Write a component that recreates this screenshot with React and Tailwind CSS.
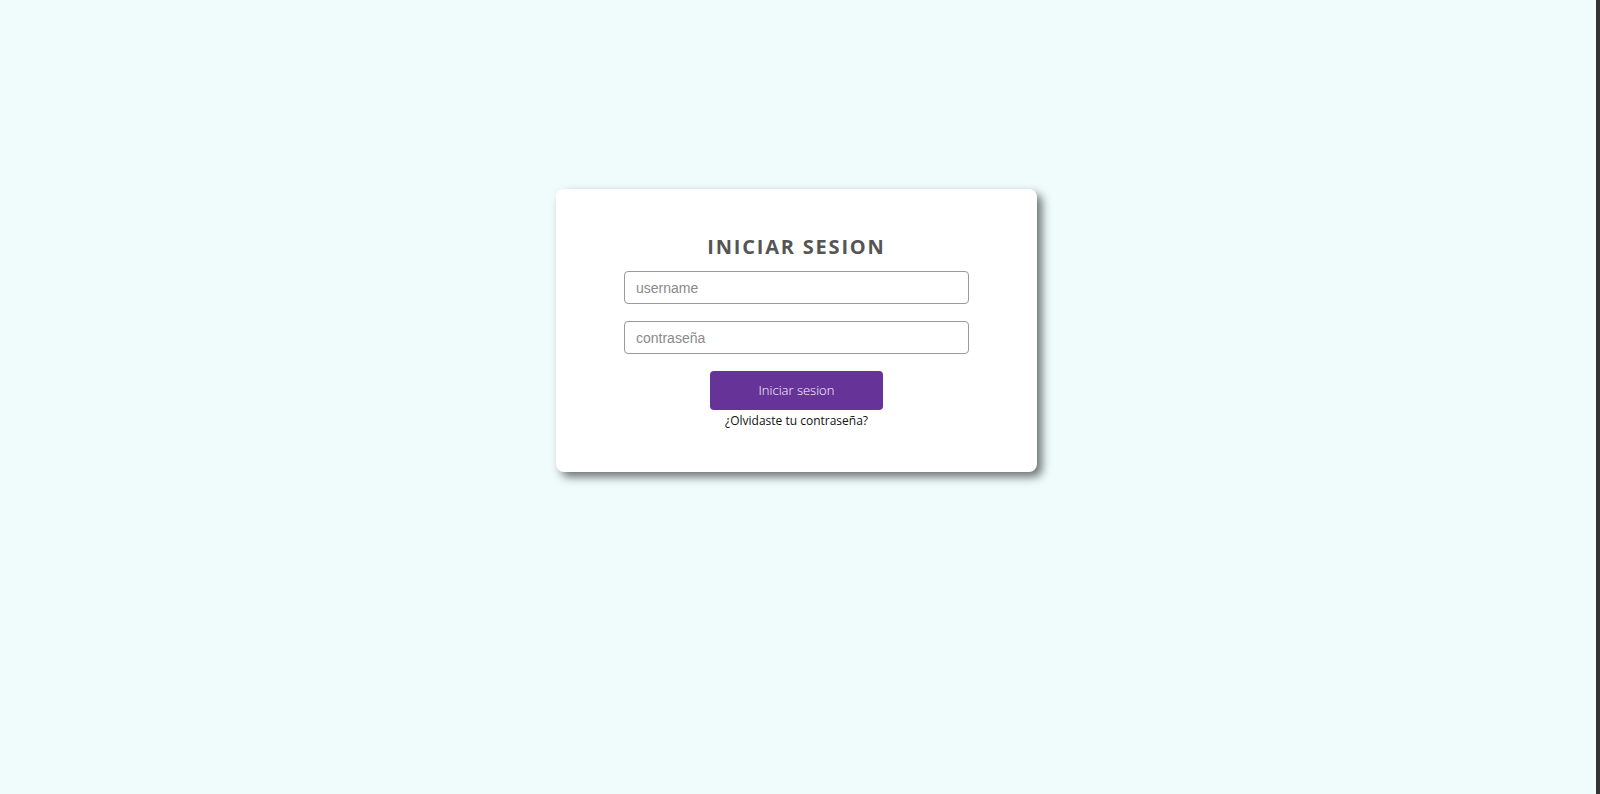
export default function App() {
  return (
    <div className="flex h-[794px] w-full overflow-hidden">
      <main className="flex flex-1 justify-center bg-[#f0fcfc] pr-[3px]">
        <div className="mt-[189px] flex h-[283px] w-[481px] flex-col items-center rounded-[8px] bg-white pt-[44px] shadow-[5px_5px_10px_rgba(0,0,0,0.55)]">
          <h1 className="text-[20px] font-bold leading-[28px] tracking-[1.8px] text-[#555]" style={{ fontFamily: '"Open Sans", sans-serif' }}>
            INICIAR SESION
          </h1>
          <form className="mt-[10px] flex flex-col items-center">
            <input
              type="text"
              placeholder="username"
              className="h-[33px] w-[345px] rounded-[4px] border border-[#9a9a9a] px-[11px] text-[14px] outline-none placeholder:text-[#8a8a8a]"
              style={{ fontFamily: '"Liberation Sans", Arial, sans-serif' }}
            />
            <input
              type="password"
              placeholder="contraseña"
              className="mt-[17px] h-[33px] w-[345px] rounded-[4px] border border-[#9a9a9a] px-[11px] text-[14px] outline-none placeholder:text-[#8a8a8a]"
              style={{ fontFamily: '"Liberation Sans", Arial, sans-serif' }}
            />
            <button
              type="button"
              className="mt-[17px] h-[39px] w-[173px] rounded-[4px] bg-[#663399] text-[13px] font-light text-white"
              style={{ fontFamily: '"Open Sans", sans-serif' }}
            >
              Iniciar sesion
            </button>
            <a href="#" className="mt-[2px] text-[12px] leading-[17px] text-[#111]" style={{ fontFamily: '"Open Sans", sans-serif' }}>
              ¿Olvidaste tu contraseña?
            </a>
          </form>
        </div>
      </main>
      <div className="w-[4px] bg-[#333]" />
    </div>
  );
}
